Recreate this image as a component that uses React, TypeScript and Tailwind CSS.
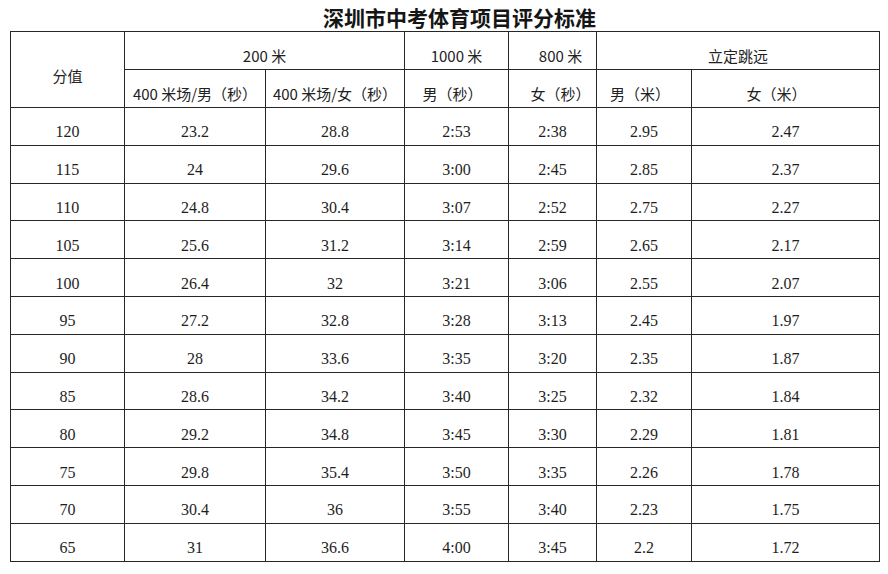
const rows: string[][] = [
  ['120', '23.2', '28.8', '2:53', '2:38', '2.95', '2.47'],
  ['115', '24', '29.6', '3:00', '2:45', '2.85', '2.37'],
  ['110', '24.8', '30.4', '3:07', '2:52', '2.75', '2.27'],
  ['105', '25.6', '31.2', '3:14', '2:59', '2.65', '2.17'],
  ['100', '26.4', '32', '3:21', '3:06', '2.55', '2.07'],
  ['95', '27.2', '32.8', '3:28', '3:13', '2.45', '1.97'],
  ['90', '28', '33.6', '3:35', '3:20', '2.35', '1.87'],
  ['85', '28.6', '34.2', '3:40', '3:25', '2.32', '1.84'],
  ['80', '29.2', '34.8', '3:45', '3:30', '2.29', '1.81'],
  ['75', '29.8', '35.4', '3:50', '3:35', '2.26', '1.78'],
  ['70', '30.4', '36', '3:55', '3:40', '2.23', '1.75'],
  ['65', '31', '36.6', '4:00', '3:45', '2.2', '1.72'],
];

const title = '深圳市中考体育项目评分标准';
const sans = "font-['Noto_Sans_CJK_SC',sans-serif]";
const cell = 'border border-[#262626] text-center align-middle p-0';

export default function App() {
  return (
    <div className="w-[888px] h-[574px] bg-white overflow-hidden">
      <div className="h-[31px] flex items-center pt-[3px] pl-[323px]">
        <h1
          className={`w-[244px] flex justify-between text-[21px] leading-none font-bold text-[#151515] ${sans}`}
        >
          {title.split('').map((ch, i) => (
            <span key={i}>{ch}</span>
          ))}
        </h1>
      </div>
      <div className="pl-[10px]">
        <table className="border-collapse table-fixed w-[869px] text-[#1e1e1e]">
          <colgroup>
            <col className="w-[114px]" />
            <col className="w-[141px]" />
            <col className="w-[139px]" />
            <col className="w-[104px]" />
            <col className="w-[88px]" />
            <col className="w-[95px]" />
            <col className="w-[188px]" />
          </colgroup>
          <thead className={`text-[15px] text-[#222] ${sans}`}>
            <tr className="h-[38px]">
              <th rowSpan={2} className={`${cell} font-normal pt-[14px]`}>分值</th>
              <th colSpan={2} className={`${cell} font-normal pt-[12px]`}>200 米</th>
              <th className={`${cell} font-normal pt-[12px]`}>1000 米</th>
              <th className={`${cell} font-normal pt-[12px] pl-[16px]`}>800 米</th>
              <th colSpan={2} className={`${cell} font-normal pt-[12px]`}>立定跳远</th>
            </tr>
            <tr className="h-[38px]">
              <th className={`${cell} font-normal pt-[12px]`}>400 米场/男（秒）</th>
              <th className={`${cell} font-normal pt-[12px]`}>400 米场/女（秒）</th>
              <th className={`${cell} font-normal pt-[12px] pr-[8px]`}>男（秒）</th>
              <th className={`${cell} font-normal pt-[12px] pl-[16px]`}>女（秒）</th>
              <th className={`${cell} font-normal pt-[12px] pr-[8px]`}>男（米）</th>
              <th className={`${cell} font-normal pt-[12px] pr-[18px]`}>女（米）</th>
            </tr>
          </thead>
          <tbody className="font-['Liberation_Serif',serif] text-[16px]">
            {rows.map((r) => (
              <tr key={r[0]} className="h-[37.8px]">
                {r.map((v, i) => (
                  <td key={i} className={`${cell} pt-[12px]`}>
                    {v}
                  </td>
                ))}
              </tr>
            ))}
          </tbody>
        </table>
      </div>
    </div>
  );
}
